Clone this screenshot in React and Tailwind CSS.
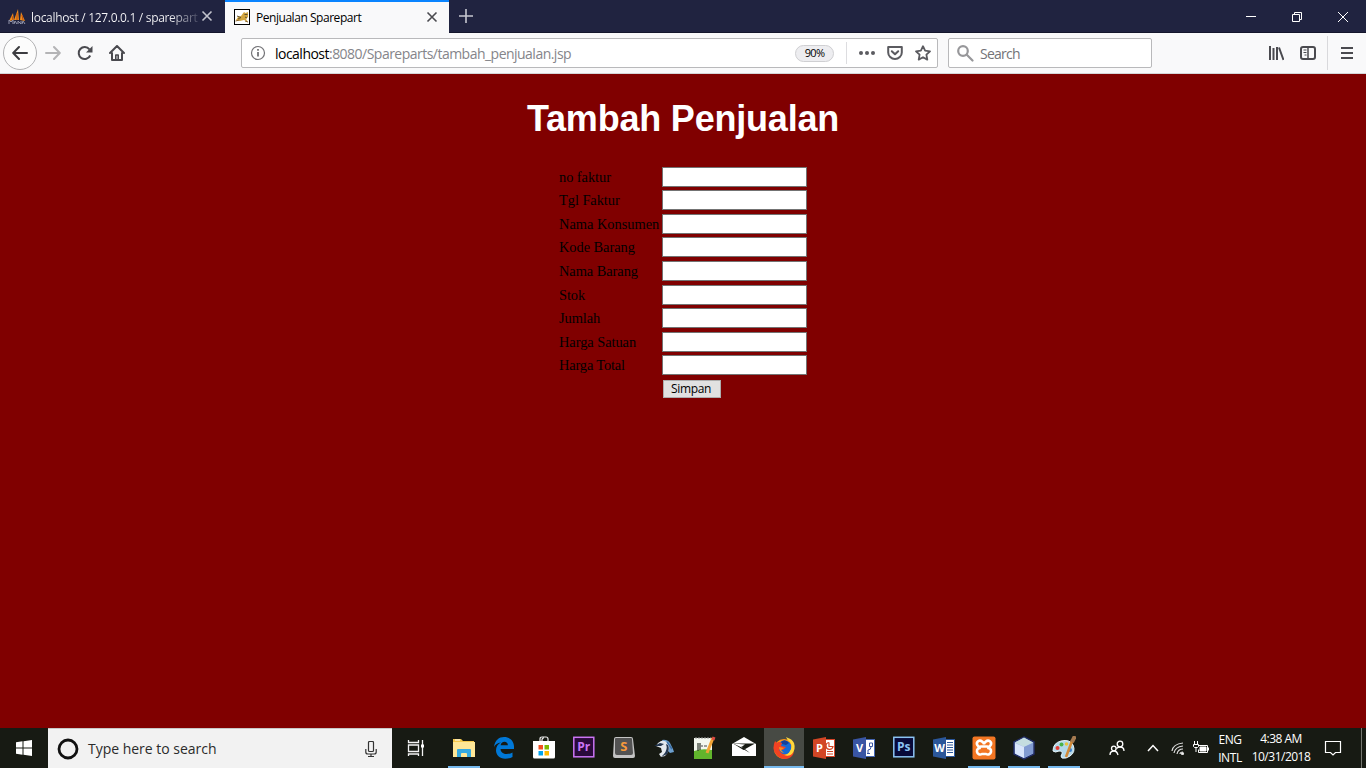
const fields = [
  ["no faktur", "tracking-[-0.05px]"],
  ["Tgl Faktur", "tracking-[-0.05px]"],
  ["Nama Konsumen", "tracking-[0px]"],
  ["Kode Barang", "tracking-[-0.05px]"],
  ["Nama Barang", "tracking-[-0.05px]"],
  ["Stok", "tracking-[-0.1px]"],
  ["Jumlah", "tracking-[-0.05px]"],
  ["Harga Satuan", "tracking-[-0.05px]"],
  ["Harga Total", "tracking-[-0.15px]"],
];

function Svg({ size = 16, className = "", children, ...rest }) {
  return (
    <svg width={size} height={size} viewBox={`0 0 ${size} ${size}`} fill="none" className={`shrink-0 ${className}`} {...rest}>
      {children}
    </svg>
  );
}

function Close({ className }) {
  return (
    <Svg size={12} className={className} stroke="currentColor" strokeWidth="1.6">
      <path d="M1.500 1.500l9 9M10.500 1.500l-9 9" />
    </Svg>
  );
}

function TabBar() {
  return (
    <div className="flex h-[33px] border-b border-[#14162c] bg-[#202340] font-['Open_Sans',sans-serif] text-[12px]">
      <div className="flex w-[225px] items-center pt-[2px] pl-[8px]">
        <Svg size={18}>
          <path d="M1 13L5 5l1 7zM6 12L10 1l1 11zM12 12l1-8 4 9z" fill="#ef8b1b" />
          <path d="M4 8l1 4M9 5v7M14 7l1 5" stroke="#b84b0d" />
          <path d="M1 16v-4l2 2 2-2v4M6 16l1-3 2 3M10 16v-3l3 3v-3M14 16l1-3 2 3" stroke="#9295aa" />
        </Svg>
        <span className="mt-[2px] ml-[5px] w-[168px] bg-[linear-gradient(90deg,#f9f9fa_82%,#40435c_100%)] bg-clip-text text-transparent whitespace-nowrap tracking-[-0.31px]">localhost / 127.0.0.1 / sparepart</span>
        <Close className="mb-[2px] ml-[2px] text-[#c2c3cd]" />
      </div>
      <div className="z-10 flex h-[33px] w-[224px] items-center border-t-2 border-[#0a84ff] bg-[#f9f9fa] pl-[9px] text-black">
        <Svg size={16} className="mb-px">
          <rect x=".5" y=".5" width="15" height="15" fill="#fff" stroke="#000" />
          <path d="M2 11l2-3 3-1 3-4 1.500 1L14 3v5l-2 2 2 3-4-2-4 1z" fill="#d2a641" />
          <path d="M3 7l4 1.500-3 1.500M10.500 5.500h3M11 8l2 1" stroke="#62522e" />
          <path d="M1.500 12l4-1M11 12l3 1" stroke="#8b6930" />
        </Svg>
        <span className="mt-px ml-[6px] w-[170px] whitespace-nowrap tracking-[-0.46px]">Penjualan Sparepart</span>
        <Close className="mb-[2px] text-[#4a4a4f]" />
      </div>
      <div className="flex w-[34px] items-center justify-center">
        <Svg size={14} stroke="#c6c7d0" strokeWidth="1.600"><path d="M7 0v14M0 7h14" /></Svg>
      </div>
      <div className="ml-auto flex items-center pt-[1px] pr-[17px] text-white">
        <Svg size={12} stroke="currentColor"><path d="M1 5.500h10" /></Svg>
        <Svg size={12} className="ml-[34px]" stroke="currentColor"><path d="M1.500 3.500h7v7h-7zM3.500 3.500v-2h7v7h-2" /></Svg>
        <Svg size={12} className="ml-[34px]" stroke="currentColor"><path d="M1 1l10 10M11 1L1 11" /></Svg>
      </div>
    </div>
  );
}

function Toolbar() {
  return (
    <div className="flex h-[41px] items-center border-b border-[#d5d5d8] bg-[#f9f9fa] font-['Open_Sans',sans-serif] text-[#4a4a4f]">
      <div className="ml-[3px] flex size-[34px] items-center justify-center rounded-full border border-[#b1b1b3] bg-[#fcfcfc]">
        <Svg size={16} stroke="#3c3c40" strokeWidth="2" strokeLinecap="round" strokeLinejoin="round"><path d="M15 8H1.500M7 2L1.200 8 7 14" /></Svg>
      </div>
      <Svg size={16} className="ml-[8px]" stroke="#b4b4b6" strokeWidth="2" strokeLinecap="round" strokeLinejoin="round"><path d="M1 8h13.500M9 2l5.800 6L9 14" /></Svg>
      <Svg size={16} className="ml-[16px]">
        <path d="M13.200 10.500a6 6 0 1 1-.8-6.200" stroke="#4a4a4f" strokeWidth="2" />
        <path d="M15.500 1v6.500H9z" fill="#4a4a4f" />
      </Svg>
      <Svg size={16} className="ml-[16px]" stroke="#4a4a4f" strokeWidth="2" strokeLinejoin="round" strokeLinecap="round">
        <path d="M1 8l7-7 7 7M3 8v7h10V8" />
        <path d="M6.800 14v-4h2.400v4" strokeWidth="1.600" />
      </Svg>
      <div className="ml-[116px] flex h-[30px] w-[697px] items-center rounded-[2px] border border-[#b9b9bb] bg-white">
        <Svg size={16} className="ml-[8px]" stroke="#737377">
          <circle cx="8" cy="8" r="6.500" strokeWidth="1.200" />
          <path d="M8 7v4.500M8 4v1.800" strokeWidth="1.800" />
        </Svg>
        <span className="mt-[2px] ml-[9px] w-[520px] text-[14px] leading-[20px] tracking-[-0.52px] whitespace-nowrap text-[#85858a]"><span className="text-black">localhost</span>:8080/Spareparts/tambah_penjualan.jsp</span>
        <span className="mt-px flex h-[17px] w-[39px] items-center justify-center rounded-full border border-[#cfcfd2] bg-[#ededf0] text-[11px] tracking-[-0.7px] text-black">90%</span>
        <span className="ml-[12px] h-[22px] w-px bg-[#dddde0]" />
        <Svg size={18} className="ml-[11px]"><g fill="#5b5b60"><circle cx="3" cy="9" r="2" /><circle cx="9" cy="9" r="2" /><circle cx="15" cy="9" r="2" /></g></Svg>
        <Svg size={16} className="ml-[11px]" stroke="#5b5b60" strokeWidth="2" strokeLinecap="round" strokeLinejoin="round">
          <path d="M1.200 2h13.600v5.500a6.800 6.500 0 0 1-13.600 0z" /><path d="M4.800 6.200L8 9.300l3.200-3.100" />
        </Svg>
        <Svg size={16} className="ml-[12px]" stroke="#5b5b60" strokeWidth="1.800" strokeLinejoin="round">
          <path d="M8 1.200l2.100 4.500 4.900.6-3.600 3.400.9 4.900L8 12.200l-4.300 2.400.9-4.900L1 6.300l4.900-.6z" />
        </Svg>
      </div>
      <div className="ml-[10px] flex h-[30px] w-[204px] items-center rounded-[2px] border border-[#b9b9bb] bg-white">
        <Svg size={17} className="ml-[8px]" stroke="#97979a" strokeWidth="2.200" strokeLinecap="round"><circle cx="6" cy="6" r="4.800" /><path d="M9.800 9.800l5.700 5.700" /></Svg>
        <span className="mt-[2px] ml-[6px] text-[14px] leading-[20px] tracking-[-0.75px] text-[#737377]">Search</span>
      </div>
      <Svg size={16} className="ml-[116px]" stroke="#4a4a4f" strokeWidth="2"><path d="M2 1v14M5.500 3v12M9 2v13M11 2.500l4.500 12.500" /></Svg>
      <Svg size={16} className="ml-[16px]" stroke="#4a4a4f"><rect x="1" y="2" width="14" height="12" rx="2" strokeWidth="2" /><path d="M8 2v12" strokeWidth="1.500" /><path d="M3.500 5h3M3.500 7.500h3M4.500 10h2" /></Svg>
      <span className="ml-[11px] h-[34px] w-px bg-[#d9d9dc]" />
      <Svg size={12} className="ml-[13px]" stroke="#4a4a4f" strokeWidth="2"><path d="M0 1h12M0 6h12M0 11h12" /></Svg>
    </div>
  );
}

function Office({ letter, color, dark, children }) {
  return (
    <Svg size={24}>
      <rect x="11" y="3.500" width="11.500" height="17" fill="#fff" stroke={color} />
      {children}
      <path d="M1 3.500L14 1v22L1 20.500z" fill={dark} />
      <text x="7.500" y="16" textAnchor="middle" fontFamily="Open Sans, sans-serif" fontWeight="700" fontSize="11" fill="#fff">{letter}</text>
    </Svg>
  );
}

function AdobeTile({ label, bg, fg }) {
  return (
    <Svg size={24}>
      <rect x="1.800" y="1.300" width="20" height="19.500" fill={bg} stroke={fg} strokeWidth="1.500" />
      <text x="11.800" y="15.300" textAnchor="middle" fontFamily="Open Sans, sans-serif" fontWeight="700" fontSize="12" fill={fg}>{label}</text>
    </Svg>
  );
}

const apps = [
  { name: "explorer", open: true, icon: (
    <Svg size={24}>
      <path d="M1 3h8l2 2h11v16H1z" fill="#f5c84c" /><path d="M1 6h22v15H1z" fill="#ffe797" /><path d="M3 4h5" stroke="#fff" />
      <path d="M5 21v-7q0-1 1-1h12q1 0 1 1v7h-4v-3q0-1-1-1h-4q-1 0-1 1v3z" fill="#35a9e1" />
    </Svg>) },
  { name: "edge", icon: (
    <Svg size={24}>
      <path d="M2 11C3 4 7 1 12 1c7 0 10 5 10 9.500V13H8.500c.2 3.500 3 5 6 5 2.500 0 4.500-.6 6-1.600v4.500c-2 1.200-4.500 1.800-7.300 1.800C7.500 22.700 4 19 4 14.200c0-3.500 2-6.200 5-7.700C5.500 6.500 3.300 8.700 2 11zM8.600 9.300h7.300C15.900 7 14.500 5.700 12.400 5.700c-2 0-3.400 1.400-3.800 3.600z" fill="#0078d7" />
    </Svg>) },
  { name: "store", icon: (
    <Svg size={24}>
      <path d="M8 6V3q0-2 2-2h4q2 0 2 2v3M10 6V4q0-2 2-2" stroke="#eee" strokeWidth="1.200" />
      <path d="M1 5h22v16q0 1.500-1.500 1.500h-19Q1 22.500 1 21z" fill="#fff" />
      <path d="M6.500 9H11v4.500H6.500z" fill="#f25022" /><path d="M12.500 9H17v4.500h-4.500z" fill="#7fba00" /><path d="M6.500 15H11v4.500H6.500z" fill="#00a4ef" /><path d="M12.500 15H17v4.500h-4.500z" fill="#ffb900" />
    </Svg>) },
  { name: "premiere", icon: <AdobeTile label="Pr" bg="#2a0a3b" fg="#cb74f5" /> },
  { name: "sublime", icon: (
    <Svg size={24}>
      <path d="M2 3q0-2 2-2h15q2 0 2 2l2 17q0 2-2 2H3q-2 0-2-2z" fill="#c4c4c4" /><path d="M3 3q0-1 1-1h15q1 0 1 1l1 14q0 2-2 2H5q-2 0-2-2z" fill="#535353" />
      <text x="11.800" y="14.500" textAnchor="middle" fontFamily="Open Sans, sans-serif" fontWeight="700" fontSize="13" fill="#f69a3c">S</text>
    </Svg>) },
  { name: "bird", icon: (
    <Svg size={24}>
      <path d="M10 4q5-1 8 3l3 6 1 3-4 1-5-5z" fill="#6c9fce" />
      <path d="M9 5q5-1 8 4 1 6-4 11l-4 1-2-3 3-2-1-4-5-2 2-3z" fill="#e4e9ee" />
      <path d="M2 10l6-3 4 1-3 2zM14 8q2 5-2 10l-3 3 6-3q3-5 1-9z" fill="#233650" />
      <path d="M15 6l5 7" stroke="#3d6fa6" strokeWidth="1.500" />
    </Svg>) },
  { name: "notes", icon: (
    <Svg size={24}>
      <path d="M2 2h18v21H2z" fill="#f3f7ee" /><path d="M2 15q8-3 18-1v9H2z" fill="#61b52c" /><path d="M3 2h16" stroke="#999" strokeDasharray="2 1" />
      <path d="M6 7v8M8 7v7" stroke="#2d352a" strokeWidth="1.200" /><path d="M9 10h2M12 10h3" stroke="#444" /><path d="M21 2l-6 15" stroke="#f0a335" strokeWidth="3" /><path d="M22 1l-1 3" stroke="#db4b42" strokeWidth="3" />
    </Svg>) },
  { name: "mail", icon: (
    <Svg size={26}>
      <path d="M1 9L13 2l12 7v12H1z" fill="#fff" /><path d="M2 8.500h22l-11.500 6.500z" fill="#171a13" /><path d="M2 8.500l12 1-3 2 5 6-3-4z" fill="#fff" /><path d="M10 11l9 7-7-4z" fill="#171a13" />
    </Svg>) },
  { name: "firefox", open: true, active: true, icon: (
    <Svg size={24}>
      <circle cx="12" cy="13" r="10" fill="#ff9416" /><circle cx="12.500" cy="11.500" r="7" fill="#146ad5" />
      <path d="M9 6q4-4 8 1l-3 2-4-1z" fill="#163f99" />
      <path d="M3 5q-3 7 0 12 4 6 10 6 7 0 9-7-4 4-8 3-6-1-7-6l4 1 3-3-5-1 1-3Q6 5 5 7z" fill="#f24222" />
      <path d="M14 1q1 3 4 5 3 4 0 9-2 4-6 4 5 2 8-1 4-5 2-11Q20 3 16 2z" fill="#ffd83b" /><path d="M7 11l5 1-3 2 3 3q-5-1-5-6z" fill="#ff8c18" />
    </Svg>) },
  { name: "powerpoint", icon: <Office letter="P" color="#d8472a" dark="#d24625"><path d="M17 6.500v4h4a3.500 3.500 0 1 1-4-4M15 15.500h6M15 18h6" stroke="#d24625" strokeWidth="1.200" /></Office> },
  { name: "visio", icon: <Office letter="V" color="#4566b2" dark="#3955a3"><path d="M17.500 7h3v3.500h-3zM19 11q0 3-3 3v3M15 17.500h3" stroke="#3955a3" strokeWidth="1" /></Office> },
  { name: "photoshop", icon: <AdobeTile label="Ps" bg="#080a39" fg="#8bc3f3" /> },
  { name: "word", icon: <Office letter="W" color="#2b579a" dark="#2b579a"><path d="M15 6.500h6M15 9h6M15 11.500h6M15 14h6M15 16.500h6" stroke="#2b579a" strokeWidth="1.200" /></Office> },
  { name: "xampp", open: true, icon: (
    <Svg size={24}>
      <rect x=".5" y=".5" width="23" height="23" rx="2" fill="#f37623" />
      <path d="M12 10.500H9A3 3 0 1 1 10 5.500q2 1 2 3 0-2 2-3a3 3 0 1 1 1 5h-3zM9 12a3.300 3.300 0 1 0 1 6h4a3.300 3.300 0 1 0 1-6" stroke="#fff" strokeWidth="2.600" />
    </Svg>) },
  { name: "cube", open: true, icon: (
    <Svg size={24}>
      <path d="M12 1l10 5v12l-10 5-10-5V6z" fill="#9eb8e7" stroke="#222d66" strokeWidth="1.500" /><path d="M12 1.500l9 5-9 4.500-9-4.500z" fill="#c4dde0" /><path d="M3 7l9 4v11l-9-4.500z" fill="#d8e5fb" /><path d="M21 7l-9 4v11l9-4.500z" fill="#819bd1" />
    </Svg>) },
  { name: "paint", open: true, icon: (
    <Svg size={24}>
      <path d="M1 15Q1 7 9 5q9-2 12 4 3 7-3 11-4 3-8 2-2-2 0-4 1-3-3-3-4 2-6 0z" fill="#b3d8e9" stroke="#e9f6fb" />
      <circle cx="5.500" cy="12" r="2" fill="#e33d35" /><circle cx="9.500" cy="8.500" r="2" fill="#47b249" /><circle cx="14.500" cy="8" r="1.800" fill="#eac23c" /><circle cx="18" cy="14" r="2" fill="#3b80ca" />
      <path d="M20 5l-6 16" stroke="#d38a38" strokeWidth="2.500" /><path d="M23 0l-3 6" stroke="#a57a50" strokeWidth="4" />
    </Svg>) },
];

function Taskbar() {
  return (
    <div className="flex h-[40px] bg-[#171a13] font-['Open_Sans',sans-serif]">
      <div className="flex w-[48px] items-center justify-center">
        <Svg size={16}><path fill="#fff" d="M0 2.300L6.500 1.300v6.200H0zM7.500 1.200L16 0v7.500H7.500zM0 8.500h6.500v6.200L0 13.800zM7.500 8.500H16V16l-8.500-1.200z" /></Svg>
      </div>
      <div className="flex w-[344px] items-center border-t border-[#c8c8c8] bg-[#f2f2f2] text-[#2b2b2b]">
        <Svg size={22} className="ml-[9px]"><circle cx="11" cy="11" r="9" stroke="#111" strokeWidth="2.800" /></Svg>
        <span className="ml-[9px] text-[14px] tracking-[-0.02px]">Type here to search</span>
        <Svg size={16} className="mr-[13px] ml-auto" stroke="#333" strokeWidth="1.200"><rect x="5.500" y=".5" width="5" height="10" rx="1" /><path d="M2.800 8v3q0 2 2 2h6.400q2 0 2-2V8M8 13v2.500M5 15.500h6" /></Svg>
      </div>
      <div className="flex w-[52px] items-center justify-center pr-[4px]">
        <Svg size={18} stroke="#f2f2f2" strokeWidth="1.300"><path d="M1.500 1v2.500h10V1M1.500 6h10v6.500h-10zM1.500 17v-2h10v2M15.500 1v16" /><path d="M14 5.500h3v3h-3z" fill="#fff" stroke="none" /></Svg>
      </div>
      <div className="flex">
        {apps.map((a) => (
          <div key={a.name} className={`flex h-[40px] w-[40px] flex-col items-center ${a.active ? "bg-[#474a44]" : ""}`}>
            <span className="flex h-[38px] items-center pt-[2px]">{a.icon}</span>
            {a.open && <span className={`h-[2px] bg-[#76b9ed] ${a.active ? "w-full" : "w-[32px]"}`} />}
          </div>
        ))}
      </div>
      <div className="flex flex-1 items-center text-[12px] leading-[18px] text-white">
        <Svg size={16} className="ml-[25px]" stroke="#fff" strokeWidth="1.300"><circle cx="11" cy="4" r="2.800" /><circle cx="4.800" cy="8.500" r="2.300" /><path d="M1 15q0-4 4-4 3 0 4 4M7.500 8.500Q9 7 11 7q4 0 4 4" /></Svg>
        <Svg size={12} className="ml-[22px]" stroke="#fff" strokeWidth="1.500"><path d="M1 9l5-5.500L11 9" /></Svg>
        <Svg size={14} className="ml-[12px]" stroke="#ddd" strokeWidth="1.200"><path d="M1 10Q2 3 12 2M3 12Q4 6 12 5M6 13q1-5 6-5M9 13q0-2 3-2" /><circle cx="11.500" cy="12.500" r="1" fill="#fff" /></Svg>
        <Svg size={16} className="ml-[8px]" stroke="#fff"><path d="M5.500 5.500h9v7h-9v-3M15.500 7.500v3" /><path d="M7 7h6v4H7z" fill="#fff" /><path d="M1.500 1v3M4.500 1v3M.5 4.500h5v2l-1 1h-3l-1-1zM3 7.500V12" /></Svg>
        <div className="mt-px ml-[7px] w-[28px] text-center tracking-[-0.4px] whitespace-nowrap">ENG<br />INTL</div>
        <div className="ml-[7px] w-[60px] text-center tracking-[-0.5px] whitespace-nowrap">4:38 AM<br />10/31/2018</div>
        <Svg size={18} className="ml-[13px]" stroke="#fff" strokeWidth="1.200"><path d="M1.500 2.500h15v11h-5L9 16l-2.500-2.500h-5z" /></Svg>
        <span className="mr-[4px] ml-auto h-full w-px bg-[#74766f]" />
      </div>
    </div>
  );
}

export default function App() {
  return (
    <div className="flex h-[768px] w-[1366px] flex-col overflow-hidden">
      <TabBar />
      <Toolbar />
      <main className="flex flex-1 flex-col items-center bg-[#800000]">
        <h1 className="mt-[24px] h-[42px] font-['Liberation_Sans',sans-serif] text-[36px] leading-[42px] font-bold tracking-[-0.2px] whitespace-nowrap text-white">Tambah Penjualan</h1>
        <form className="mt-[26.8px] w-[248px] font-['Liberation_Serif',serif] text-[14.4px] text-black">
          {fields.map(([label, tracking]) => (
            <label key={label} className="flex h-[23.55px] items-start">
              <span className={`w-[103px] pt-[1px] leading-[18px] whitespace-nowrap ${tracking}`}>{label}</span>
              <input className="h-[20px] w-[145px] border border-[#737373] bg-white" />
            </label>
          ))}
          <button type="button" className="mt-[1px] ml-[104px] flex h-[18px] w-[58px] items-center justify-center border border-[#adadad] bg-[#e1e1e1] pt-px pr-[2px] font-['Open_Sans',sans-serif] text-[12px] tracking-[-0.35px]">Simpan</button>
        </form>
      </main>
      <Taskbar />
    </div>
  );
}
